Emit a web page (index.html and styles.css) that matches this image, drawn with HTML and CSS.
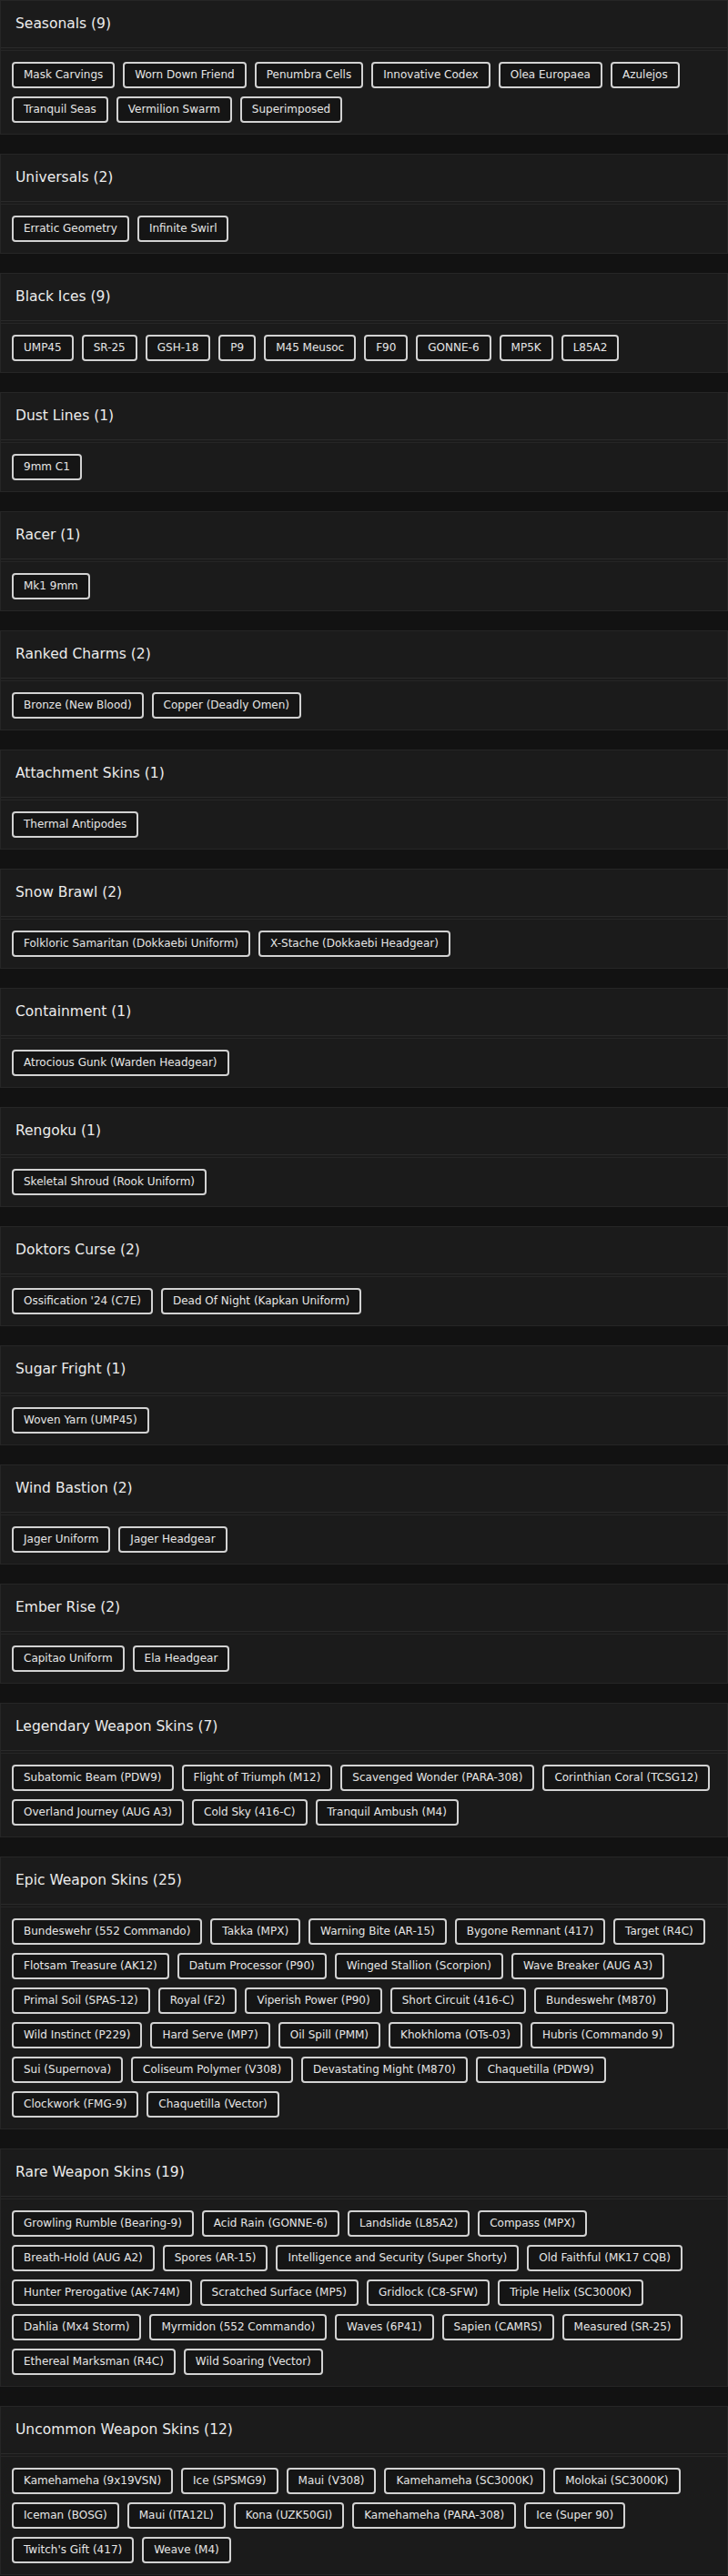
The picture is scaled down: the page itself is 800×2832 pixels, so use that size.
FILE: index.html
```html
<!DOCTYPE html>
<html lang="en">
<head>
<meta charset="utf-8">
<title>Collection</title>
<link rel="stylesheet" href="styles.css">
</head>
<body>
<main class="page">

<section class="card">
  <h2 class="card-title">Seasonals (9)</h2>
  <div class="chips">
    <span class="chip">Mask Carvings</span><span class="chip">Worn Down Friend</span><span class="chip">Penumbra Cells</span><span class="chip">Innovative Codex</span><span class="chip">Olea Europaea</span><span class="chip">Azulejos</span><span class="chip">Tranquil Seas</span><span class="chip">Vermilion Swarm</span><span class="chip">Superimposed</span>
  </div>
</section>

<section class="card">
  <h2 class="card-title">Universals (2)</h2>
  <div class="chips">
    <span class="chip">Erratic Geometry</span><span class="chip">Infinite Swirl</span>
  </div>
</section>

<section class="card">
  <h2 class="card-title">Black Ices (9)</h2>
  <div class="chips">
    <span class="chip">UMP45</span><span class="chip">SR-25</span><span class="chip">GSH-18</span><span class="chip">P9</span><span class="chip">M45 Meusoc</span><span class="chip">F90</span><span class="chip">GONNE-6</span><span class="chip">MP5K</span><span class="chip">L85A2</span>
  </div>
</section>

<section class="card">
  <h2 class="card-title">Dust Lines (1)</h2>
  <div class="chips">
    <span class="chip">9mm C1</span>
  </div>
</section>

<section class="card">
  <h2 class="card-title">Racer (1)</h2>
  <div class="chips">
    <span class="chip">Mk1 9mm</span>
  </div>
</section>

<section class="card">
  <h2 class="card-title">Ranked Charms (2)</h2>
  <div class="chips">
    <span class="chip">Bronze (New Blood)</span><span class="chip">Copper (Deadly Omen)</span>
  </div>
</section>

<section class="card">
  <h2 class="card-title">Attachment Skins (1)</h2>
  <div class="chips">
    <span class="chip">Thermal Antipodes</span>
  </div>
</section>

<section class="card">
  <h2 class="card-title">Snow Brawl (2)</h2>
  <div class="chips">
    <span class="chip">Folkloric Samaritan (Dokkaebi Uniform)</span><span class="chip">X-Stache (Dokkaebi Headgear)</span>
  </div>
</section>

<section class="card">
  <h2 class="card-title">Containment (1)</h2>
  <div class="chips">
    <span class="chip">Atrocious Gunk (Warden Headgear)</span>
  </div>
</section>

<section class="card">
  <h2 class="card-title">Rengoku (1)</h2>
  <div class="chips">
    <span class="chip">Skeletal Shroud (Rook Uniform)</span>
  </div>
</section>

<section class="card">
  <h2 class="card-title">Doktors Curse (2)</h2>
  <div class="chips">
    <span class="chip">Ossification '24 (C7E)</span><span class="chip">Dead Of Night (Kapkan Uniform)</span>
  </div>
</section>

<section class="card">
  <h2 class="card-title">Sugar Fright (1)</h2>
  <div class="chips">
    <span class="chip">Woven Yarn (UMP45)</span>
  </div>
</section>

<section class="card">
  <h2 class="card-title">Wind Bastion (2)</h2>
  <div class="chips">
    <span class="chip">Jager Uniform</span><span class="chip">Jager Headgear</span>
  </div>
</section>

<section class="card">
  <h2 class="card-title">Ember Rise (2)</h2>
  <div class="chips">
    <span class="chip">Capitao Uniform</span><span class="chip">Ela Headgear</span>
  </div>
</section>

<section class="card">
  <h2 class="card-title">Legendary Weapon Skins (7)</h2>
  <div class="chips">
    <span class="chip">Subatomic Beam (PDW9)</span><span class="chip">Flight of Triumph (M12)</span><span class="chip">Scavenged Wonder (PARA-308)</span><span class="chip">Corinthian Coral (TCSG12)</span><span class="chip">Overland Journey (AUG A3)</span><span class="chip">Cold Sky (416-C)</span><span class="chip">Tranquil Ambush (M4)</span>
  </div>
</section>

<section class="card">
  <h2 class="card-title">Epic Weapon Skins (25)</h2>
  <div class="chips">
    <span class="chip">Bundeswehr (552 Commando)</span><span class="chip">Takka (MPX)</span><span class="chip">Warning Bite (AR-15)</span><span class="chip">Bygone Remnant (417)</span><span class="chip">Target (R4C)</span><span class="chip">Flotsam Treasure (AK12)</span><span class="chip">Datum Processor (P90)</span><span class="chip">Winged Stallion (Scorpion)</span><span class="chip">Wave Breaker (AUG A3)</span><span class="chip">Primal Soil (SPAS-12)</span><span class="chip">Royal (F2)</span><span class="chip">Viperish Power (P90)</span><span class="chip">Short Circuit (416-C)</span><span class="chip">Bundeswehr (M870)</span><span class="chip">Wild Instinct (P229)</span><span class="chip">Hard Serve (MP7)</span><span class="chip">Oil Spill (PMM)</span><span class="chip">Khokhloma (OTs-03)</span><span class="chip">Hubris (Commando 9)</span><span class="chip">Sui (Supernova)</span><span class="chip">Coliseum Polymer (V308)</span><span class="chip">Devastating Might (M870)</span><span class="chip">Chaquetilla (PDW9)</span><span class="chip">Clockwork (FMG-9)</span><span class="chip">Chaquetilla (Vector)</span>
  </div>
</section>

<section class="card">
  <h2 class="card-title">Rare Weapon Skins (19)</h2>
  <div class="chips">
    <span class="chip">Growling Rumble (Bearing-9)</span><span class="chip">Acid Rain (GONNE-6)</span><span class="chip">Landslide (L85A2)</span><span class="chip">Compass (MPX)</span><span class="chip">Breath-Hold (AUG A2)</span><span class="chip">Spores (AR-15)</span><span class="chip">Intelligence and Security (Super Shorty)</span><span class="chip">Old Faithful (MK17 CQB)</span><span class="chip">Hunter Prerogative (AK-74M)</span><span class="chip">Scratched Surface (MP5)</span><span class="chip">Gridlock (C8-SFW)</span><span class="chip">Triple Helix (SC3000K)</span><span class="chip">Dahlia (Mx4 Storm)</span><span class="chip">Myrmidon (552 Commando)</span><span class="chip">Waves (6P41)</span><span class="chip">Sapien (CAMRS)</span><span class="chip">Measured (SR-25)</span><span class="chip">Ethereal Marksman (R4C)</span><span class="chip">Wild Soaring (Vector)</span>
  </div>
</section>

<section class="card">
  <h2 class="card-title">Uncommon Weapon Skins (12)</h2>
  <div class="chips">
    <span class="chip">Kamehameha (9x19VSN)</span><span class="chip">Ice (SPSMG9)</span><span class="chip">Maui (V308)</span><span class="chip">Kamehameha (SC3000K)</span><span class="chip">Molokai (SC3000K)</span><span class="chip">Iceman (BOSG)</span><span class="chip">Maui (ITA12L)</span><span class="chip">Kona (UZK50GI)</span><span class="chip">Kamehameha (PARA-308)</span><span class="chip">Ice (Super 90)</span><span class="chip">Twitch's Gift (417)</span><span class="chip">Weave (M4)</span>
  </div>
</section>

</main>
</body>
</html>
```

FILE: styles.css
```css
* {
  box-sizing: border-box;
}

html,
body {
  margin: 0;
  padding: 0;
  background: #121212;
}

body {
  font-family: "DejaVu Sans", "Liberation Sans", sans-serif;
  color: #e4e4e4;
}

.page {
  display: flex;
  flex-direction: column;
  gap: 21px;
}

.card {
  background: #1b1b1b;
  border: 1px solid #262626;
}

.card-title {
  margin: 0;
  padding: 15px 16px;
  font-size: 15.5px;
  line-height: 21px;
  font-weight: normal;
  color: #ececec;
  border-bottom: 1px solid #2a2a2a;
}

.chips {
  margin-top: 2px;
  border-top: 1px solid #262626;
  padding: 12px;
  display: flex;
  flex-wrap: wrap;
  gap: 9px 9px;
}

.chip {
  display: inline-block;
  height: 29px;
  padding: 5px 11px;
  border: 2px solid #d2d2d2;
  border-radius: 4px;
  background: #151515;
  color: #e6e6e6;
  font-size: 12px;
  line-height: 15px;
  white-space: nowrap;
}
```
